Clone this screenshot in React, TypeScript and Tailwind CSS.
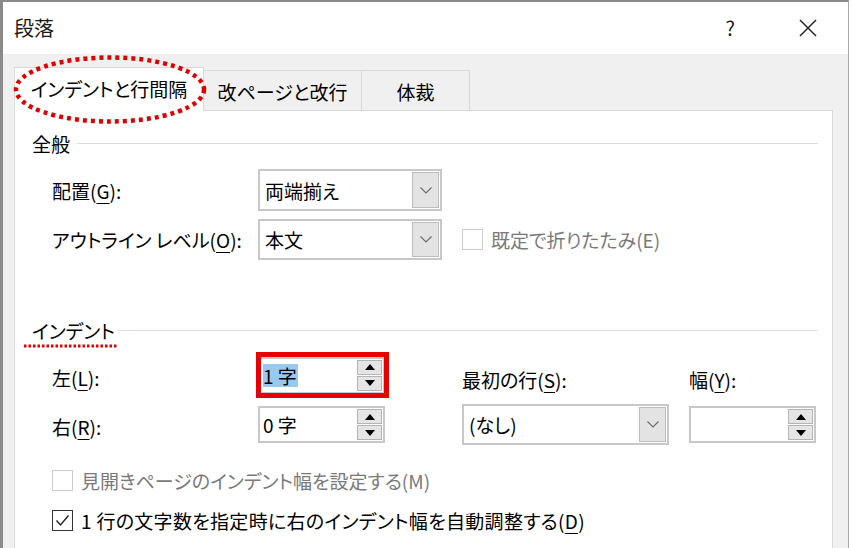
import React from "react";

function Tri({ up }: { up?: boolean }) {
  return (
    <svg width="10" height="6" viewBox="0 0 10 6">
      {up ? <polygon points="0,6 10,6 5,0" fill="#000" /> : <polygon points="0,0 10,0 5,6" fill="#000" />}
    </svg>
  );
}

function Spinner({ children, h }: { children?: React.ReactNode; h: string }) {
  return (
    <div className={`flex w-[127px] ${h} border-2 border-[#c8c8c8] bg-white`}>
      <div className="flex-1 flex items-center pl-[3px]">{children}</div>
      <div className="flex flex-col w-[26px] py-[1px] pr-[1px] gap-[1px]">
        <div className="flex-1 bg-[#e5e5e5] border border-[#b4b4b4] flex items-center justify-center">
          <Tri up />
        </div>
        <div className="flex-1 bg-[#e5e5e5] border border-[#b4b4b4] flex items-center justify-center">
          <Tri />
        </div>
      </div>
    </div>
  );
}

function Dropdown({ text, w, h }: { text: string; w: string; h: string }) {
  return (
    <div className={`flex ${w} ${h} border-2 border-[#c8c8c8] bg-white`}>
      <div className="flex-1 flex items-center pl-[5px]">{text}</div>
      <div className="w-[27px] my-[1px] mr-[1px] bg-[#e3e3e3] border border-[#bdbdbd] flex items-center justify-center">
        <svg width="12" height="7" viewBox="0 0 12 7">
          <polyline points="0.5,0.5 6,6 11.5,0.5" fill="none" stroke="#6a6a6a" strokeWidth="1.1" />
        </svg>
      </div>
    </div>
  );
}

function U({ c }: { c: string }) {
  return <span className="underline underline-offset-[4px] decoration-1">{c}</span>;
}

export default function App() {
  return (
    <div className="w-[853px] h-[548px] overflow-hidden bg-white relative font-['Noto_Sans_CJK_JP',sans-serif] [font-feature-settings:'palt'] text-[19px] text-black leading-none">
      <div className="w-[849px] h-[600px] border-l-[3px] border-t-2 border-r border-[#8a8a8a] border-r-[#a8a8a8] flex flex-col bg-[#f0f0f0]">
        {/* title bar */}
        <div className="h-[52px] bg-white flex items-center pl-[11px] pr-[31px] shrink-0">
          <span className="text-[20px] text-[#1a1a1a]">段落</span>
          <span className="ml-auto text-[20px] text-[#1a1a1a] mr-[64px]">?</span>
          <svg width="18" height="18" viewBox="0 0 18 18">
            <line x1="1" y1="1" x2="17" y2="17" stroke="#222" strokeWidth="1.4" />
            <line x1="17" y1="1" x2="1" y2="17" stroke="#222" strokeWidth="1.4" />
          </svg>
        </div>
        {/* tabs */}
        <div className="h-[56px] flex items-end pl-[11px] shrink-0">
          <div className="w-[190px] h-[44px] bg-white border border-b-0 border-[#d9d9d9] flex items-center justify-center relative z-10 -mb-px pb-[2px]">
            インデントと行間隔
          </div>
          <div className="w-[158px] h-[40px] border border-l-0 border-b-0 border-[#d9d9d9] flex items-center justify-center pt-[2px]">
            改ページと改行
          </div>
          <div className="w-[108px] h-[40px] border border-l-0 border-b-0 border-[#d9d9d9] flex items-center justify-center pt-[2px]">
            体裁
          </div>
        </div>
        {/* panel */}
        <div className="ml-[11px] w-[819px] flex-1 bg-white border border-[#d9d9d9] pt-[20px]">
          <div className="h-[24px] flex items-center pl-[17px] pr-[14px]">
            <span>全般</span>
            <div className="flex-1 h-px bg-[#dcdcdc] ml-[7px]" />
          </div>
          <div className="pl-[37px]">
            <div className="mt-[14px] flex items-center h-[42px]">
              <div className="w-[206px]">
                配置(<U c="G" />):
              </div>
              <Dropdown text="両端揃え" w="w-[184px]" h="h-[42px]" />
            </div>
            <div className="mt-[8px] flex items-center h-[41px]">
              <div className="w-[206px]">
                アウトライン レベル(<U c="O" />):
              </div>
              <Dropdown text="本文" w="w-[184px]" h="h-[41px]" />
              <div className="ml-[20px] w-[21px] h-[21px] border border-[#cccccc] bg-white" />
              <span className="ml-[8px] text-[#7a7a7a]">既定で折りたたみ(E)</span>
            </div>
          </div>
          <div className="mt-[58px] h-[24px] flex items-center pl-[17px] pr-[14px]">
            <span className="relative">
              インデント
              <svg className="absolute left-[-8px] top-[23px]" width="94" height="4" viewBox="0 0 94 4">
                <line x1="0" y1="2" x2="94" y2="2" stroke="#e00000" strokeWidth="3" strokeDasharray="2.5 2" />
              </svg>
            </span>
            <div className="flex-1 h-px bg-[#dcdcdc] ml-[3px]" />
          </div>
          <div className="pl-[37px]">
            <div className="mt-[15px] flex items-center h-[36px]">
              <div className="w-[206px] pt-[5px]">
                左(<U c="L" />):
              </div>
              <div className="relative">
                <Spinner h="h-[37px]">
                  <span className="bg-[#99c9ef] py-[2px] pr-[1px]">1 字</span>
                </Spinner>
                <div className="absolute left-[-2px] top-[-5px] right-[-4px] bottom-[-4px] border-[5px] border-[#e60000]" />
              </div>
              <div className="ml-[77px] w-[227px] pt-[8px]">
                最初の行(<U c="S" />):
              </div>
              <div className="pt-[8px]">
                幅(<U c="Y" />):
              </div>
            </div>
            <div className="mt-[11px] flex items-center h-[41px]">
              <div className="w-[206px] pt-[3px]">
                右(<U c="R" />):
              </div>
              <Spinner h="h-[37px]">0 字</Spinner>
              <div className="ml-[77px]">
                <Dropdown text="(なし)" w="w-[207px]" h="h-[41px]" />
              </div>
              <div className="ml-[20px]">
                <Spinner h="h-[37px]" />
              </div>
            </div>
            <div className="mt-[23px] flex items-center h-[24px]">
              <div className="w-[21px] h-[21px] border border-[#cccccc] bg-white" />
              <span className="ml-[8px] text-[#7a7a7a]">見開きページのインデント幅を設定する(M)</span>
            </div>
            <div className="mt-[16px] flex items-center h-[24px]">
              <div className="w-[21px] h-[21px] border border-[#333333] bg-white flex items-center justify-center">
                <svg width="15" height="13" viewBox="0 0 15 13">
                  <polyline points="1.5,6.5 5.5,11 13.5,1.5" fill="none" stroke="#222" strokeWidth="1.4" />
                </svg>
              </div>
              <span className="ml-[8px] tracking-[0.3px]">
                1 行の文字数を指定時に右のインデント幅を自動調整する(<U c="D" />)
              </span>
            </div>
          </div>
        </div>
      </div>
      {/* red dotted ellipse annotation */}
      <svg className="absolute left-[12px] top-[54px] z-20" width="196" height="71" viewBox="0 0 196 71">
        <ellipse cx="98" cy="35.5" rx="94" ry="32" fill="none" stroke="#e00000" strokeWidth="4.5" strokeDasharray="4 4" />
      </svg>
    </div>
  );
}
